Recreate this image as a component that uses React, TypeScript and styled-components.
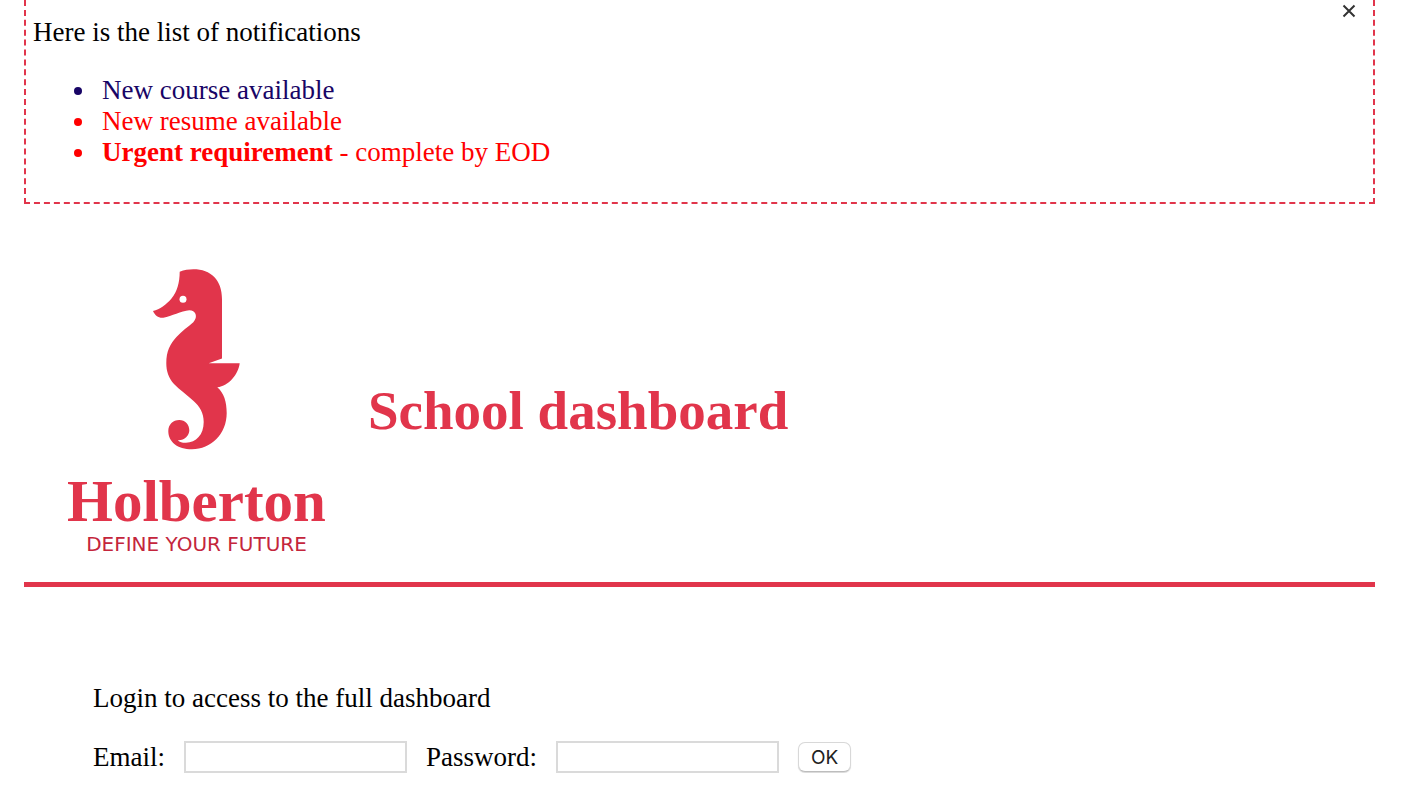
import React from 'react';
import styled, { createGlobalStyle } from 'styled-components';

const brand = '#e1354b';

const GlobalStyle = createGlobalStyle`
  *, *::before, *::after { box-sizing: border-box; }
  body {
    margin: 0;
    background: #fff;
    color: #000;
    font: 27px/31px "Liberation Serif", "Times New Roman", serif;
  }
`;

const Page = styled.div`
  padding: 0 26px 0 24px;
`;

const Notifications = styled.section`
  position: relative;
  padding: 17px 7px 34px;
  border: 2px dashed ${brand};
  border-top: 0;
`;

const Text = styled.p`
  margin: 0;
`;

const List = styled.ul`
  margin: 27px 0 0;
  padding-left: 64px;
`;

const Item = styled.li<{ $urgent?: boolean }>`
  padding-left: 5px;
  color: ${({ $urgent }) => ($urgent ? '#ff0000' : '#180566')};
`;

const CloseButton = styled.button`
  position: absolute;
  top: 3px;
  right: 16px;
  display: flex;
  padding: 0;
  border: 0;
  background: none;
  cursor: pointer;
`;

const Header = styled.header`
  display: flex;
  align-items: center;
  gap: 42px;
  padding: 61px 43px 26px;
  border-bottom: 5px solid ${brand};
`;

const Logo = styled.div`
  display: flex;
  flex-direction: column;
  align-items: center;
  color: ${brand};
`;

const Wordmark = styled.span`
  margin-top: 17px;
  font-size: 59px;
  font-weight: bold;
  line-height: 62px;
`;

const Tagline = styled.span`
  color: #c4253c;
  font-family: "DejaVu Sans", sans-serif;
  font-size: 20px;
  line-height: 24px;
`;

const Title = styled.h1`
  margin: 0;
  color: ${brand};
  font-size: 55px;
  line-height: 64px;
`;

const Login = styled.main`
  padding: 96px 69px 0;
`;

const Form = styled.form`
  display: flex;
  align-items: center;
  gap: 19px;
  margin-top: 27px;
`;

const Field = styled.input`
  width: 223px;
  height: 32px;
  padding: 2px 6px;
  border: 2px solid #dadada;
  background: #fff;
  font: 20px "Liberation Sans", Arial, sans-serif;
`;

const SubmitButton = styled.button`
  height: 30px;
  padding: 0 12px;
  border: 1px solid #d8d8d8;
  border-bottom-color: #bdbdbd;
  border-radius: 7px;
  background: #fff;
  box-shadow: 0 1px 1px #d8d8d8;
  color: #222;
  font: 19px Inter, sans-serif;
`;

const Seahorse = () => (
  <svg width="92" height="188" viewBox="0 0 92 188" aria-hidden="true">
    <path
      fill="currentColor"
      d="M29.7 6.7C34 5 39 4.3 43.3 4.3C61 4.3 72 15 72 34V93.5L58.7 98.3H89.7C88.5 109 79 121 67.3 122.3C74 128 76.7 137 76.7 148C76.7 169 61 184.3 42 184.3C27.5 184.3 18.3 177 18.3 166C18.3 159.5 23 155 29.3 155C35.2 155 39.3 159.5 39.3 165.3C39.3 171 34 175.8 27.7 175.3C30 177.3 33 178 36 177.8C46 177.3 53.7 170 53.7 157C53.7 148 50 141.5 43.3 135.7C37 130 29.5 124.5 24 119C18.5 113 16.3 106 16.3 98.3C16.3 86 20 79 26.7 71.7C32 66 38 62 43.3 57.3C48.5 51.5 45.5 45.3 39.3 45.3C31 46.3 22 51 13.3 52.7C8.5 53.2 5 50.5 3 46C10 44.5 16 40 21.7 33.3C27 26.5 29.7 18 29.7 6.7Z"
    />
    <circle cx="33" cy="34.3" r="3.5" fill="#fff" />
  </svg>
);

export default function App() {
  return (
    <>
      <GlobalStyle />
      <Page>
        <Notifications>
          <Text>Here is the list of notifications</Text>
          <List>
            <Item>New course available</Item>
            <Item $urgent>New resume available</Item>
            <Item $urgent>
              <strong>Urgent requirement</strong> - complete by EOD
            </Item>
          </List>
          <CloseButton type="button" aria-label="Close">
            <svg width="16" height="16" viewBox="0 0 16 16" aria-hidden="true">
              <path d="M2.5 2.5L13.5 13.5M13.5 2.5L2.5 13.5" stroke="#333" strokeWidth="2" />
            </svg>
          </CloseButton>
        </Notifications>
        <Header>
          <Logo>
            <Seahorse />
            <Wordmark>Holberton</Wordmark>
            <Tagline>DEFINE YOUR FUTURE</Tagline>
          </Logo>
          <Title>School dashboard</Title>
        </Header>
        <Login>
          <Text>Login to access to the full dashboard</Text>
          <Form onSubmit={(event) => event.preventDefault()}>
            <label htmlFor="email">Email:</label>
            <Field id="email" type="email" />
            <label htmlFor="password">Password:</label>
            <Field id="password" type="password" />
            <SubmitButton type="submit">OK</SubmitButton>
          </Form>
        </Login>
      </Page>
    </>
  );
}
